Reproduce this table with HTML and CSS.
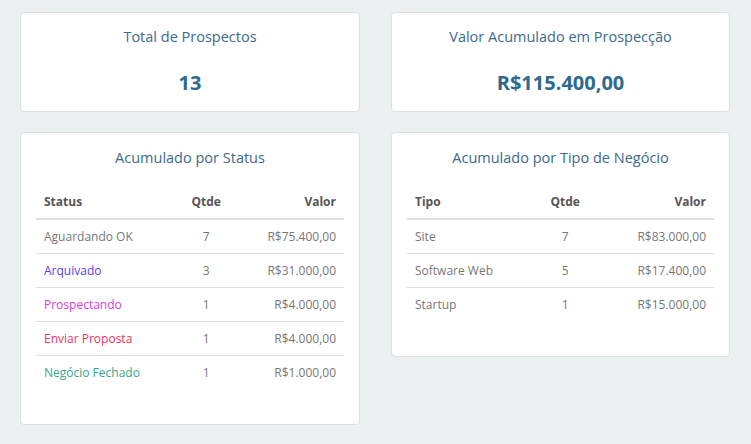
FILE: index.html
```html
<!DOCTYPE html>
<html lang="pt-BR">
<head>
<meta charset="utf-8">
<title>Prospecção</title>
<link rel="stylesheet" href="styles.css">
</head>
<body>
<main class="dash">
  <section class="card stat">
    <h2 class="card-title">Total de Prospectos</h2>
    <div class="stat-value">13</div>
  </section>
  <section class="card stat">
    <h2 class="card-title">Valor Acumulado em Prospecção</h2>
    <div class="stat-value">R$115.400,00</div>
  </section>
  <section class="card table-card">
    <h2 class="card-title">Acumulado por Status</h2>
    <table class="tbl tbl-status">
      <thead>
        <tr><th class="c-name">Status</th><th class="c-qty">Qtde</th><th class="c-val">Valor</th></tr>
      </thead>
      <tbody>
        <tr><td class="c-name st-ok">Aguardando OK</td><td class="c-qty">7</td><td class="c-val">R$75.400,00</td></tr>
        <tr><td class="c-name st-arq">Arquivado</td><td class="c-qty">3</td><td class="c-val">R$31.000,00</td></tr>
        <tr><td class="c-name st-pro">Prospectando</td><td class="c-qty">1</td><td class="c-val">R$4.000,00</td></tr>
        <tr><td class="c-name st-env">Enviar Proposta</td><td class="c-qty">1</td><td class="c-val">R$4.000,00</td></tr>
        <tr><td class="c-name st-neg">Negócio Fechado</td><td class="c-qty">1</td><td class="c-val">R$1.000,00</td></tr>
      </tbody>
    </table>
  </section>
  <section class="card table-card">
    <h2 class="card-title">Acumulado por Tipo de Negócio</h2>
    <table class="tbl tbl-tipo">
      <thead>
        <tr><th class="c-name">Tipo</th><th class="c-qty">Qtde</th><th class="c-val">Valor</th></tr>
      </thead>
      <tbody>
        <tr><td class="c-name">Site</td><td class="c-qty">7</td><td class="c-val">R$83.000,00</td></tr>
        <tr><td class="c-name">Software Web</td><td class="c-qty">5</td><td class="c-val">R$17.400,00</td></tr>
        <tr><td class="c-name">Startup</td><td class="c-qty">1</td><td class="c-val">R$15.000,00</td></tr>
      </tbody>
    </table>
  </section>
</main>
</body>
</html>
```

FILE: styles.css
```css
* { box-sizing: border-box; }
html, body {
  margin: 0;
  padding: 0;
  background: #ecf0f1;
  font-family: "Open Sans", "Noto Sans", sans-serif;
  color: #777;
}
.dash {
  display: grid;
  grid-template-columns: 340px 1fr;
  column-gap: 31px;
  row-gap: 20px;
  padding: 12px 21px 0 20px;
  align-items: start;
}
.card {
  background: #fff;
  border: 1px solid #dcdfe0;
  border-radius: 4px;
}
.card-title {
  margin: 0;
  font-size: 14.5px;
  font-weight: 400;
  color: #3d6a8a;
  text-align: center;
  line-height: 20px;
}
.stat {
  height: 100px;
  padding-top: 14px;
}
.stat-value {
  margin-top: 23px;
  text-align: center;
  font-size: 20px;
  font-weight: 700;
  color: #2e6a8e;
  line-height: 26px;
}
.table-card {
  padding: 15px 15px 15px 15px;
}
.tbl {
  width: 100%;
  border-collapse: collapse;
  margin-top: 16px;
  margin-bottom: 20px;
  font-size: 12px;
  table-layout: fixed;
}
.tbl th, .tbl td {
  padding: 0 8px;
  height: 34px;
  vertical-align: middle;
  white-space: nowrap;
}
.tbl th {
  color: #555;
  font-weight: 700;
  border-bottom: 2px solid #dddddd;
  height: 35px;
}
.tbl tbody tr + tr td {
  border-top: 1px solid #dddddd;
}
.c-name { text-align: left; }
.c-qty { text-align: center; }
.c-val { text-align: right; }
.tbl-status .c-name { width: 46%; }
.tbl-status .c-qty { width: 18.5%; }
.tbl-tipo .c-name { width: 42%; }
.tbl-tipo .c-qty { width: 19%; }
.st-ok { color: #777; }
.st-arq { color: #5b3ce6; }
.st-pro { color: #d83ae0; }
.st-env { color: #f2325e; }
.st-neg { color: #36a58a; }
```
